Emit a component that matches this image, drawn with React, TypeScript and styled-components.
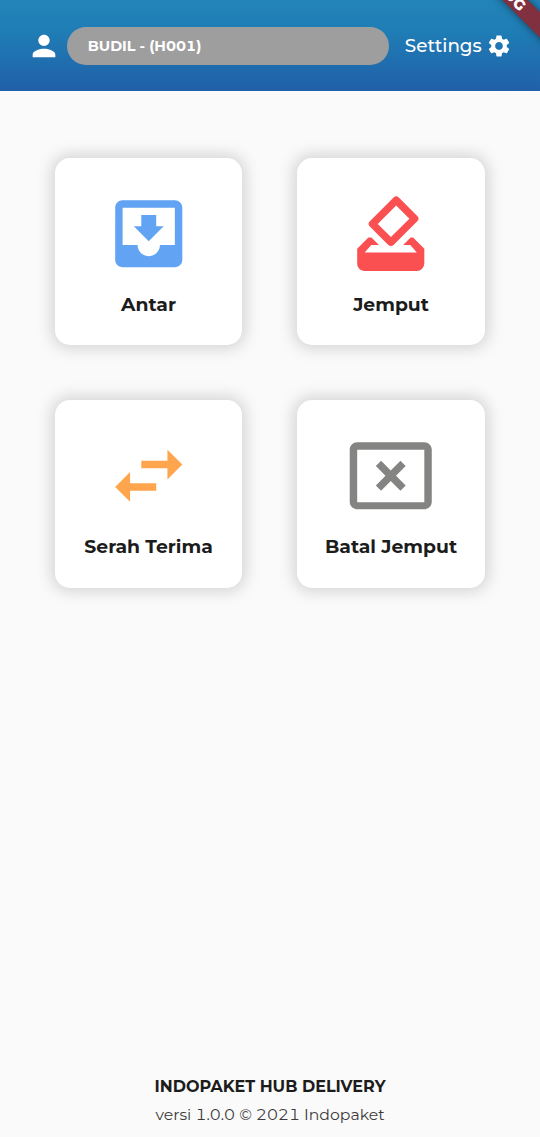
import React from "react";
import styled, { createGlobalStyle } from "styled-components";
import {
  MdPerson,
  MdSettings,
  MdMoveToInbox,
  MdHowToVote,
  MdCancelPresentation,
  MdSwapHoriz,
} from "react-icons/md";

const GlobalStyle = createGlobalStyle`
  * { box-sizing: border-box; }
  body { margin: 0; background: #fafafa; }
`;

const Screen = styled.div`
  position: relative;
  display: flex;
  flex-direction: column;
  width: 540px;
  height: 1137px;
  overflow: hidden;
  background: #fafafa;
  color: #1c1c1c;
  font-family: Montserrat, Inter, "Liberation Sans", sans-serif;
  font-variant-numeric: tabular-nums;
`;

const Header = styled.header`
  display: flex;
  align-items: center;
  height: 90.5px;
  padding: 1px 27.6px 0 27px;
  background: linear-gradient(#2285b9 0%, #1f7db5 35%, #2060a9 100%);
  color: #fff;
`;

const UserPill = styled.div`
  display: flex;
  align-items: center;
  width: 322px;
  height: 37.5px;
  margin-left: 6.3px;
  padding: 1px 0 0 20.5px;
  border-radius: 19px;
  background: #9e9e9e;
  font-size: 14.4px;
  font-weight: 700;
`;

const SettingsButton = styled.div`
  display: flex;
  align-items: center;
  margin-left: auto;
  gap: 4.8px;
  font-size: 18.3px;
  font-weight: 500;
  line-height: 24px;

  svg {
    margin-top: 1px;
  }
`;

const Ribbon = styled.div`
  position: absolute;
  left: 403px;
  top: -21.5px;
  width: 200px;
  height: 18px;
  transform: rotate(45deg);
  background: #80303f;
  box-shadow: 0 0 9px rgba(0, 0, 0, 0.5);
  font-size: 15px;
  font-weight: 800;
  line-height: 18px;
  text-align: center;
  color: #fff;
`;

const Menu = styled.main`
  display: grid;
  grid-template-columns: repeat(2, 187.5px);
  grid-auto-rows: 187.5px;
  gap: 55px;
  padding: 67px 55px 0 54.8px;
`;

const Card = styled.div<{ $tint: string }>`
  display: flex;
  flex-direction: column;
  align-items: center;
  padding-top: 31px;
  border-radius: 15px;
  background: #fff;
  box-shadow: 0 0 15px 4px rgba(0, 0, 0, 0.15);

  svg {
    flex: none;
    color: ${(p) => p.$tint};
  }
`;

const CardLabel = styled.div`
  margin-top: 14.7px;
  font-size: 18.8px;
  font-weight: 700;
  line-height: 24px;
  white-space: nowrap;
`;

const Footer = styled.footer`
  display: flex;
  flex-direction: column;
  align-items: center;
  margin-top: auto;
  padding-bottom: 8px;
  white-space: nowrap;
`;

const AppName = styled.div`
  font-size: 16px;
  font-weight: 700;
  line-height: 28px;
`;

const Version = styled.div`
  font-size: 15.7px;
  font-weight: 400;
  line-height: 28px;
  color: #3a3a3a;
`;

const items = [
  { label: "Antar", tint: "#62a3f3", Icon: MdMoveToInbox },
  { label: "Jemput", tint: "#fb5052", Icon: MdHowToVote },
  { label: "Serah Terima", tint: "#fea54e", Icon: MdSwapHoriz },
  { label: "Batal Jemput", tint: "#848482", Icon: MdCancelPresentation },
];

export default function App() {
  return (
    <Screen>
      <GlobalStyle />
      <Header>
        <MdPerson size={34} />
        <UserPill>BUDIL - (H001)</UserPill>
        <SettingsButton>
          Settings
          <MdSettings size={26} />
        </SettingsButton>
      </Header>
      <Menu>
        {items.map(({ label, tint, Icon }) => (
          <Card key={label} $tint={tint}>
            <Icon size={89.5} />
            <CardLabel>{label}</CardLabel>
          </Card>
        ))}
      </Menu>
      <Footer>
        <AppName>INDOPAKET HUB DELIVERY</AppName>
        <Version>versi 1.0.0 © 2021 Indopaket</Version>
      </Footer>
      <Ribbon>DEBUG</Ribbon>
    </Screen>
  );
}
